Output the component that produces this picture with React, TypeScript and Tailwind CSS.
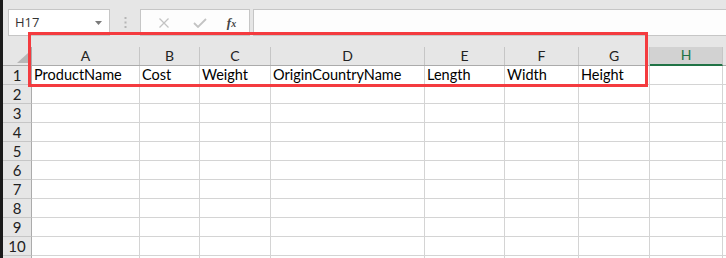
import React from "react";

const cols = [
  { l: "A", w: "w-[108px]", v: "ProductName" },
  { l: "B", w: "w-[60px]", v: "Cost" },
  { l: "C", w: "w-[71px]", v: "Weight" },
  { l: "D", w: "w-[154px]", v: "OriginCountryName" },
  { l: "E", w: "w-[80px]", v: "Length" },
  { l: "F", w: "w-[74px]", v: "Width" },
  { l: "G", w: "w-[71px]", v: "Height" },
  { l: "H", w: "w-[73px]", v: "" },
];

const rows = [1, 2, 3, 4, 5, 6, 7, 8, 9, 10, 11];

export default function App() {
  return (
    <div
      className="relative w-[726px] h-[258px] overflow-hidden bg-[#e6e6e6] flex"
      style={{ fontFamily: "Lato, 'Liberation Sans', sans-serif" }}
    >
      <div className="w-[3px] shrink-0 bg-[#1b1b1b]" />
      <div className="flex-1 flex flex-col min-w-0">
        {/* formula bar */}
        <div className="flex items-stretch pt-[9px] h-[36px] shrink-0">
          <div className="ml-[5px] w-[102px] border border-[#c6c6c6] bg-white flex items-center justify-between pl-[6px] pr-[7px]">
            <span
              className="text-[13px] text-[#333] leading-none"
              style={{ fontFamily: "'Open Sans', sans-serif" }}
            >
              H17
            </span>
            <svg width="7" height="4" viewBox="0 0 7 4">
              <path d="M0 0 L7 0 L3.5 4 Z" fill="#7a7a7a" />
            </svg>
          </div>
          <div className="w-[30px] flex items-center justify-center">
            <svg width="3" height="11" viewBox="0 0 3 11">
              <rect x="0.5" y="0" width="2" height="2" fill="#b5b5b5" />
              <rect x="0.5" y="4.5" width="2" height="2" fill="#b5b5b5" />
              <rect x="0.5" y="9" width="2" height="2" fill="#b5b5b5" />
            </svg>
          </div>
          <div className="w-[110px] border border-[#c6c6c6] bg-[#fdfdfd] flex items-center">
            <div className="w-[36px] flex justify-center ml-[5px]">
              <svg width="12" height="10" viewBox="0 0 12 10">
                <path d="M1.5 0.5 L10.5 9.5 M10.5 0.5 L1.5 9.5" stroke="#c3c3c3" strokeWidth="1.3" />
              </svg>
            </div>
            <div className="w-[36px] flex justify-center">
              <svg width="14" height="10" viewBox="0 0 14 10">
                <path d="M1 5 L5 9 L13 1" stroke="#c3c3c3" strokeWidth="1.8" fill="none" />
              </svg>
            </div>
            <div className="flex-1 flex justify-center pr-[4px]">
              <span
                className="italic text-[13px] leading-none text-[#444] font-bold"
                style={{ fontFamily: "'Liberation Serif', serif" }}
              >
                f<span className="text-[10px]">x</span>
              </span>
            </div>
          </div>
          <div className="ml-[3px] flex-1 border-y border-l border-[#c6c6c6] bg-[#fdfdfd]" />
        </div>

        {/* gap above headers */}
        <div className="h-[11px] shrink-0" />

        {/* column header row */}
        <div className="flex h-[19px] shrink-0 border-b border-[#ababab]">
          <div className="w-[29px] shrink-0 border-r border-[#ababab] relative">
            <svg className="absolute right-[3px] bottom-[2px]" width="11" height="10" viewBox="0 0 11 10">
              <path d="M11 0 L11 10 L0 10 Z" fill="#b7b7b7" />
            </svg>
          </div>
          {cols.map((c) => (
            <div
              key={c.l}
              className={`${c.w} shrink-0 border-r border-[#c6c6c6] flex items-end justify-center pb-[1px] text-[14px] leading-[16px] ${
                c.l === "H"
                  ? "bg-[#d2d2d2] text-[#217346] border-b-2 border-b-[#217346] -mb-[1px]"
                  : "text-[#222]"
              }`}
            >
              {c.l}
            </div>
          ))}
          <div className="flex-1" />
        </div>

        {/* rows */}
        {rows.map((r) => (
          <div key={r} className="flex h-[19px] shrink-0">
            <div className="w-[29px] shrink-0 border-r border-[#ababab] border-b border-b-[#c6c6c6] flex items-end justify-center text-[15px] leading-[18px] text-[#222]">
              {r <= 10 ? r : ""}
            </div>
            {cols.map((c) => (
              <div
                key={c.l}
                className={`${c.w} shrink-0 bg-white border-r border-b border-[#d4d4d4] pl-[2px] text-[14.5px] leading-[18px] text-black whitespace-nowrap overflow-hidden`}
              >
                {r === 1 ? c.v : ""}
              </div>
            ))}
            <div className="flex-1 bg-white border-b border-[#d4d4d4]" />
          </div>
        ))}
      </div>

      {/* red highlight annotation */}
      <div className="absolute left-[28px] top-[32px] w-[620px] h-[55px] border-[3px] border-[#f43b3f] pointer-events-none" />
    </div>
  );
}
